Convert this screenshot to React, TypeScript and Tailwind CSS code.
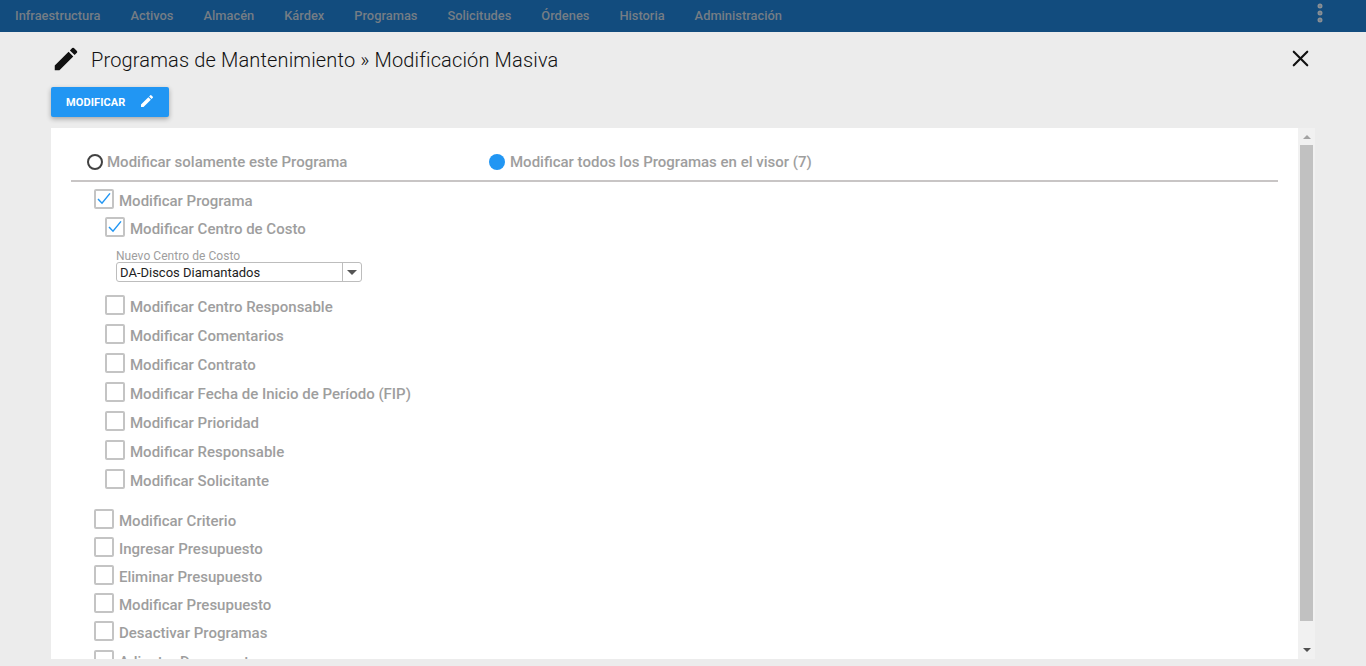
import { EllipsisVertical, X } from 'lucide-react'

const navItems = ['Infraestructura', 'Activos', 'Almacén', 'Kárdex', 'Programas', 'Solicitudes', 'Órdenes', 'Historia', 'Administración']

const subOptions = [
  'Modificar Centro Responsable',
  'Modificar Comentarios',
  'Modificar Contrato',
  'Modificar Fecha de Inicio de Período (FIP)',
  'Modificar Prioridad',
  'Modificar Responsable',
  'Modificar Solicitante',
]

const mainOptions = [
  'Modificar Criterio',
  'Ingresar Presupuesto',
  'Eliminar Presupuesto',
  'Modificar Presupuesto',
  'Desactivar Programas',
  'Adjuntar Documentos',
]

function PencilIcon({ className }: { className: string }) {
  return (
    <svg viewBox="0 0 24 24" className={className} fill="currentColor">
      <path d="M3 17.25V21h3.75L17.81 9.94l-3.75-3.75L3 17.25zM20.71 7.04a1 1 0 0 0 0-1.41l-2.34-2.34a1 1 0 0 0-1.41 0l-1.83 1.83 3.75 3.75 1.83-1.83z" />
    </svg>
  )
}

function CheckRow({ label, checked = false }: { label: string; checked?: boolean }) {
  return (
    <div className="flex items-center gap-[5px]">
      <span className="flex size-5 shrink-0 -translate-y-0.5 items-center justify-center rounded-[2px] border-2 border-[#c4c4c4] bg-white">
        {checked ? (
          <svg viewBox="0 0 20 20" className="size-5 shrink-0 text-[#2196f3]" fill="none" stroke="currentColor" strokeWidth={1.5}>
            <path d="M4 10l4 4.2L16 4.4" />
          </svg>
        ) : null}
      </span>
      <span className="text-[15px] leading-5 font-medium whitespace-nowrap text-[#9e9e9e]">{label}</span>
    </div>
  )
}

export default function App() {
  return (
    <div className="flex h-[666px] flex-col overflow-hidden bg-[#ececec] font-['Roboto',sans-serif]">
      <header className="flex h-8 shrink-0 items-center justify-between bg-[#124c7e] pr-[36px] pl-[15px]">
        <nav className="flex gap-[30px]">
          {navItems.map((item) => (
            <span key={item} className="text-[12.87px] font-medium text-[#757d85]">
              {item}
            </span>
          ))}
        </nav>
        <EllipsisVertical className="size-6 translate-x-[2px] -translate-y-[3px] text-[#8a8f94]" strokeWidth={3} />
      </header>

      <div className="flex h-[55px] shrink-0 items-center justify-between pr-[52px] pl-[51px]">
        <div className="flex items-center gap-[10px]">
          <PencilIcon className="size-[30px] -translate-y-px text-[#111]" />
          <h1 className="text-[20px] font-light tracking-[0.15px] text-[#111]">Programas de Mantenimiento » Modificación Masiva</h1>
        </div>
        <X className="size-[27px] -translate-y-px text-[#111]" strokeWidth={1.9} />
      </div>

      <div className="shrink-0 pl-[51px]">
        <button
          type="button"
          className="flex h-[30px] w-[118px] items-center gap-[14px] rounded-[2px] bg-[#2196f3] pt-[2px] pl-[15px] text-[11px] font-bold tracking-[0.01em] text-white shadow-[0_2px_5px_rgba(0,0,0,0.3)]"
        >
          MODIFICAR
          <PencilIcon className="size-4 -translate-y-[2px]" />
        </button>
      </div>

      <div className="mt-[11px] mr-[51px] mb-[7px] ml-[51px] flex min-h-0 flex-1">
        <main className="min-w-0 flex-1 overflow-hidden bg-white pt-[25px] pr-[20px] pl-[20px]">
          <div className="flex h-[29px] border-b-2 border-[#c8c5c5] pb-[9px]">
            <label className="flex w-[418px] items-center gap-1 pl-4">
              <span className="size-4 rounded-full border-2 border-[#424242]" />
              <span className="text-[15px] font-medium text-[#9e9e9e]">Modificar solamente este Programa</span>
            </label>
            <label className="flex items-center gap-[5px]">
              <span className="size-4 rounded-full bg-[#2196f3]" />
              <span className="text-[15px] font-medium text-[#9e9e9e]">Modificar todos los Programas en el visor (7)</span>
            </label>
          </div>

          <div className="pt-[9px] pl-[23px]">
            <CheckRow label="Modificar Programa" checked />
            <div className="pt-2 pl-[11px]">
              <CheckRow label="Modificar Centro de Costo" checked />
              <div className="mt-[11px] mb-[15px] ml-[11px] w-[246px]">
                <p className="text-[12px] leading-[12px] tracking-[0.05px] text-[#9e9e9e]">Nuevo Centro de Costo</p>
                <div className="flex h-5 items-stretch rounded-[3px] border border-[#bdbdbd]">
                  <span className="flex-1 pt-px pl-[3px] text-[13px] leading-[18px] text-[#222]">DA-Discos Diamantados</span>
                  <span className="flex w-[19px] items-center justify-center border-l border-[#bdbdbd]">
                    <span className="size-0 border-x-[5px] border-t-[5px] border-x-transparent border-t-[#555]" />
                  </span>
                </div>
              </div>
              <div className="flex flex-col gap-[9px]">
                {subOptions.map((option) => (
                  <CheckRow key={option} label={option} />
                ))}
              </div>
            </div>
            <div className="mt-[20px] flex flex-col gap-2 [&>*:last-child]:mt-px">
              {mainOptions.map((option) => (
                <CheckRow key={option} label={option} />
              ))}
            </div>
          </div>
        </main>

        <div className="flex w-[17px] shrink-0 flex-col items-center bg-[#f1f1f1]">
          <div className="flex h-[17px] w-full shrink-0 items-center justify-center">
            <span className="size-0 border-x-[4px] border-b-[4px] border-x-transparent border-b-[#a3a3a3]" />
          </div>
          <div className="h-[476px] w-[13px] shrink-0 bg-[#c1c1c1]" />
          <div className="flex flex-1 items-end justify-center pb-[7px]">
            <span className="size-0 border-x-[4px] border-t-[4px] border-x-transparent border-t-[#505050]" />
          </div>
        </div>
      </div>
    </div>
  )
}
